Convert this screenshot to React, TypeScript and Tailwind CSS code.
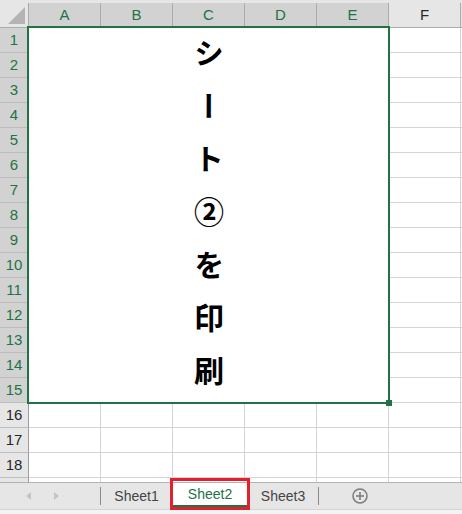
import { Fragment } from "react";
import clsx from "clsx";

const cols = ["A", "B", "C", "D", "E", "F"];
const rows = Array.from({ length: 19 }, (_, i) => i + 1);

export default function App() {
  return (
    <div className="flex h-[514px] w-[462px] flex-col overflow-hidden bg-[#f3f3f3] font-['Liberation_Sans',sans-serif]">
      <div className="h-[3px] shrink-0 bg-[#e6e6e6]" />

      {/* sheet grid */}
      <div className="grid h-[479px] shrink-0 grid-cols-[29px_repeat(6,72px)_1fr] grid-rows-[repeat(20,25px)] overflow-hidden bg-white">
        <div className="relative border-r border-b border-[#ababab] bg-[#e6e6e6]">
          <svg className="absolute right-[3px] bottom-[3px]" width="17" height="17" viewBox="0 0 17 17">
            <path d="M17 0V17H0Z" fill="#b4b4b4" />
          </svg>
        </div>
        {cols.map((c) => (
          <div
            key={c}
            className={clsx(
              "flex items-center justify-center border-r border-b border-[#ababab] text-[15px]",
              c !== "F" ? "bg-[#d2d2d2] text-[#217346]" : "bg-[#e6e6e6] text-[#262626]",
            )}
          >
            {c}
          </div>
        ))}
        <div className="border-b border-[#ababab] bg-[#e6e6e6]" />

        {/* merged A1:E15 */}
        <div className="relative col-span-5 col-start-2 row-span-15 row-start-2 flex items-center justify-center bg-white">
          <span className="mt-[16px] font-['Noto_Sans_CJK_JP',sans-serif] text-[30px] leading-none font-bold tracking-[23px] whitespace-nowrap text-black [writing-mode:vertical-rl]">
            シート②を印刷
          </span>
          <div className="absolute -top-[2px] -right-[1px] -bottom-[1px] -left-[2px] border-2 border-[#217346]" />
          <div className="absolute -right-[3px] -bottom-[3px] size-[6px] bg-[#217346]" />
        </div>

        {rows.map((r) => (
          <Fragment key={r}>
            <div
              className={clsx(
                "flex items-center justify-center border-r border-b text-[15px]",
                r <= 15
                  ? "border-r-[#ababab] border-b-[#bdbdbd] bg-[#d2d2d2] text-[#217346]"
                  : "border-r-[#9b9b9b] border-b-[#bdbdbd] bg-[#e6e6e6] text-[#262626]",
              )}
            >
              {r < 19 ? r : null}
            </div>
            {(r > 15 ? cols : ["F"]).map((c) => (
              <div key={c} className="border-r border-b border-[#d4d4d4]" />
            ))}
            <div className="border-b border-[#d4d4d4]" />
          </Fragment>
        ))}
      </div>

      {/* sheet tabs */}
      <div className="flex h-[28px] shrink-0 items-stretch border-t border-b border-t-[#b4b4b4] border-b-[#d4d4d4] bg-[#e6e6e6] text-[14px]">
        <div className="flex w-[100px] items-center gap-[23px] pl-[26px]">
          <svg width="5" height="8" viewBox="0 0 5 8">
            <path d="M5 0V8L0 4Z" fill="#c4c4c4" />
          </svg>
          <svg width="5" height="8" viewBox="0 0 5 8">
            <path d="M0 0V8L5 4Z" fill="#c4c4c4" />
          </svg>
        </div>
        <div className="h-[18px] w-px self-center bg-[#8a8a8a]" />
        <div className="flex w-[71px] items-center justify-center text-[#444]">Sheet1</div>
        <div className="relative w-[76px]">
          <div className="flex h-[24px] items-center justify-center border-b-2 border-[#217346] bg-white text-[#217346]">
            Sheet2
          </div>
          <div className="absolute -top-[5px] -right-[2px] -bottom-[1px] -left-[2px] border-[3px] border-[#e5202e]" />
        </div>
        <div className="flex w-[70px] items-center justify-center text-[#444]">Sheet3</div>
        <div className="h-[18px] w-px self-center bg-[#8a8a8a]" />
        <div className="flex items-center pl-[33px]">
          <svg width="16" height="16" viewBox="0 0 16 16" fill="none" stroke="#7b7b7b" strokeWidth="1.5">
            <circle cx="8" cy="8" r="7" />
            <path d="M8 4V12M4 8H12" />
          </svg>
        </div>
      </div>
    </div>
  );
}
